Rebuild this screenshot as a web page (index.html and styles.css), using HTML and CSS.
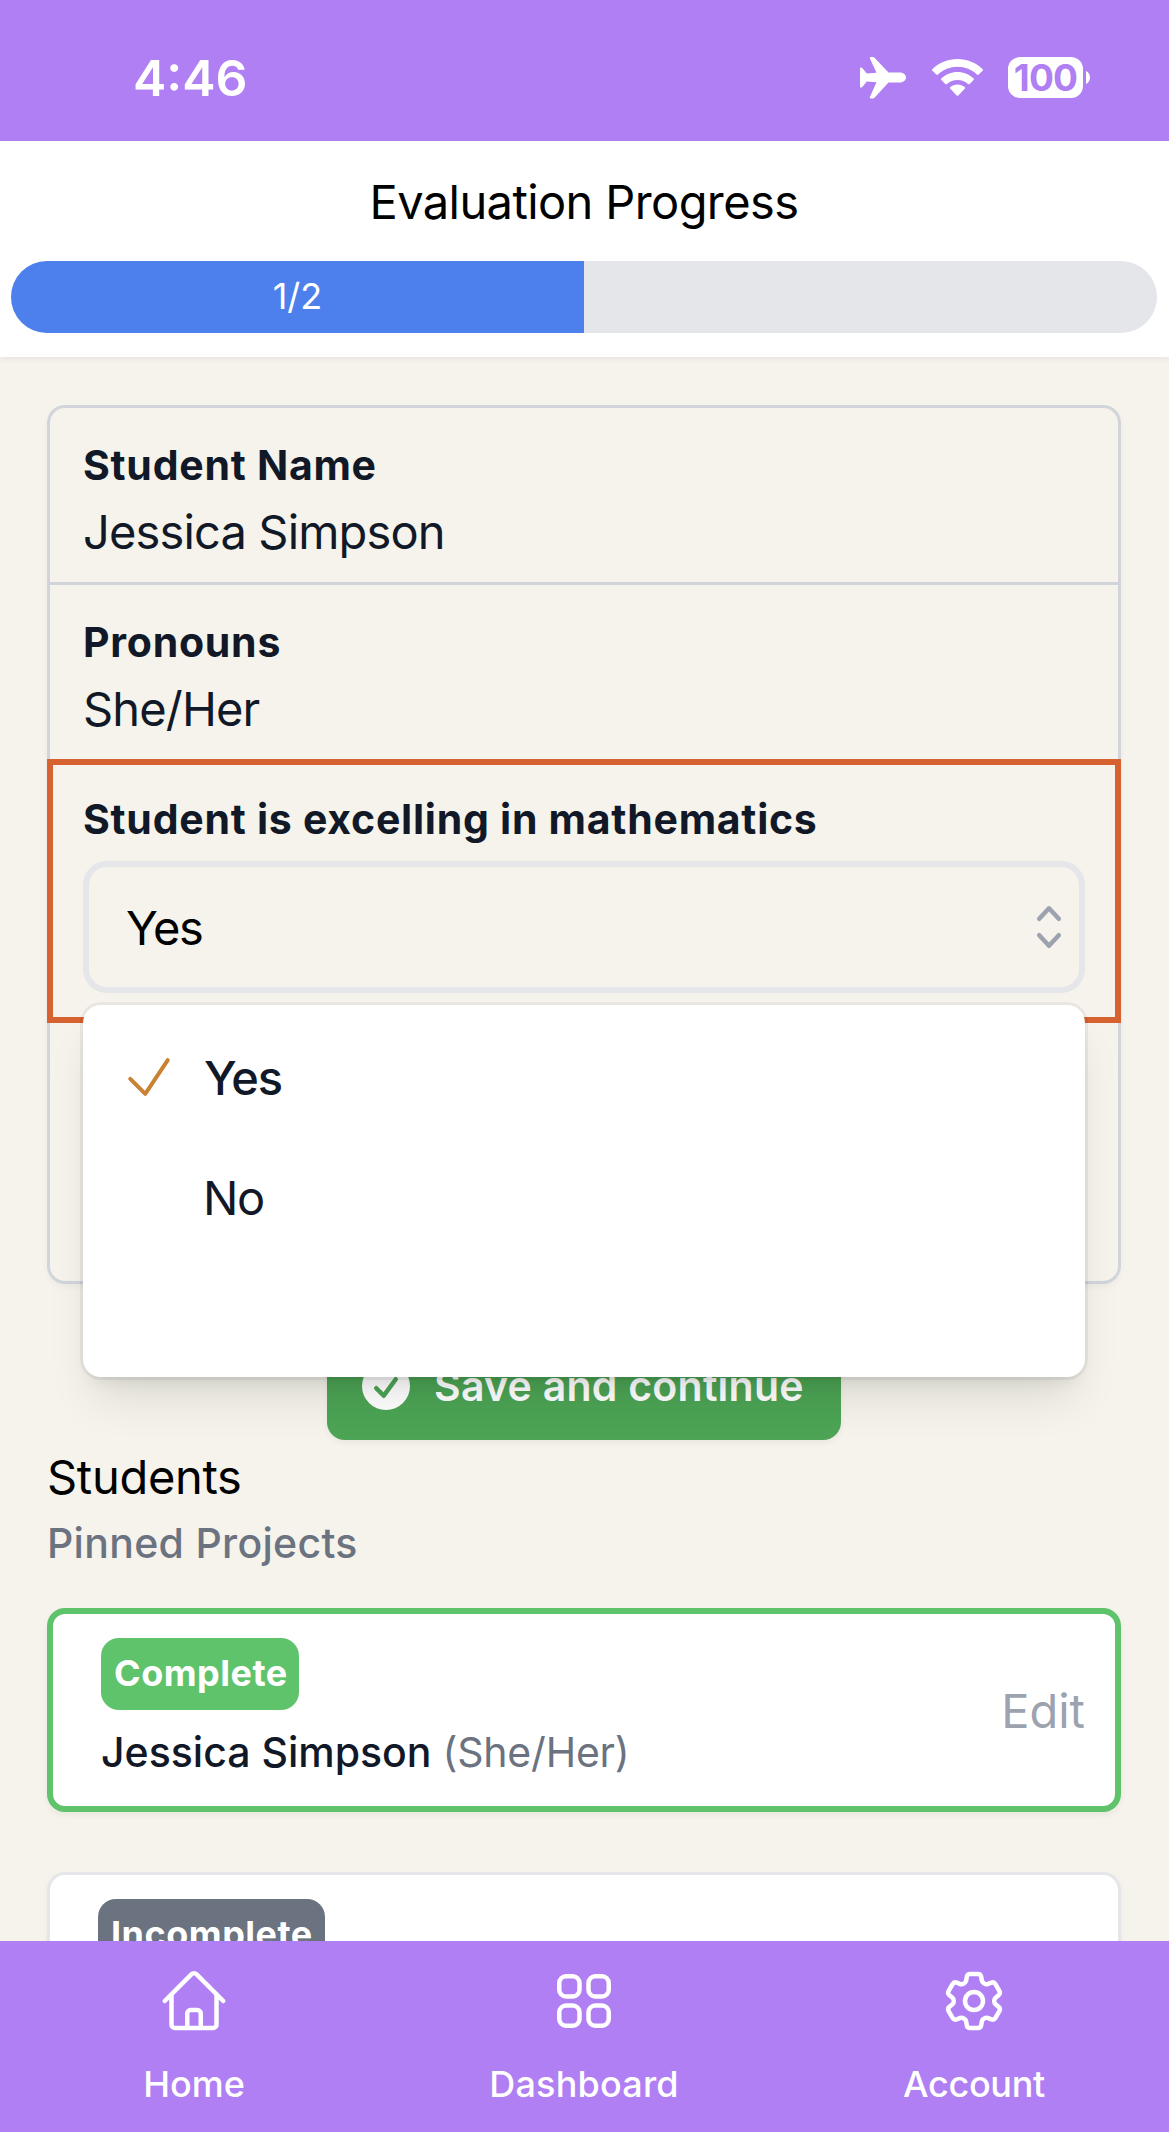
FILE: index.html
```html
<!DOCTYPE html>
<html lang="en">
<head>
<meta charset="utf-8">
<title>Evaluation Progress</title>
<link rel="stylesheet" href="styles.css">
</head>
<body>
<div class="screen">
  <div class="status-bar">
    <span class="clock">4:46</span>
    <div class="status-icons">
      <svg class="plane" viewBox="0 0 46 42" fill="#fff"><path d="M40 15.500c3.400 0 6 2.600 6 5s-2.600 5-6 5H28.500L14.500 40.700c-.6.500-1 .8-1.700.8h-2c-.8 0-1.200-.6-.9-1.400l6.600-14.900-9.700-.6L2.300 30c-.3.400-.6.600-1.100.6H.9c-.5 0-.9-.4-.9-.9V11.400c0-.5.4-.9.900-.9h.3c.5 0 .8.200 1.100.6l4.500 5.400 9.700-.7L9.900 1.400C9.600.6 10 0 10.800 0h2c.7 0 1.100.3 1.700.8l14 14.700z"/></svg>
      <svg class="wifi" viewBox="0 0 51 37" fill="#fff"><path d="M25.500 0C35.200 0 44 3.800 50.500 10c.6.600.6 1.200.1 1.700l-3.900 3.800c-.5.500-1.100.5-1.700 0-5.100-4.800-12-7.700-19.500-7.700S11.100 10.700 6 15.500c-.6.500-1.200.5-1.700 0L.4 11.700c-.5-.5-.5-1.100.1-1.700C7 3.800 15.800 0 25.500 0zM25.500 13c6.200 0 11.800 2.400 16 6.300.6.600.6 1.200.1 1.700l-3.900 3.900c-.5.500-1.100.5-1.700 0-2.800-2.500-6.400-4-10.500-4s-7.700 1.500-10.500 4c-.6.500-1.200.5-1.700 0L9.400 21c-.5-.5-.5-1.100.1-1.700 4.200-3.900 9.800-6.300 16-6.300zM25.500 25.500c2.700 0 5.200 1 7.100 2.600.6.500.6 1.100.1 1.600l-6.400 6.700c-.5.500-1.100.5-1.600 0l-6.400-6.700c-.5-.5-.5-1.100.1-1.600 1.900-1.600 4.400-2.600 7.100-2.600z"/></svg>
      <div class="battery">
        <span class="battery-body">100</span>
        <svg class="battery-tip" viewBox="0 0 4 13" fill="#fff"><path d="M0 0c2.400.9 4 3.400 4 6.500S2.400 12.100 0 13z"/></svg>
      </div>
    </div>
  </div>

  <header class="progress-header">
    <h1 class="title">Evaluation Progress</h1>
    <div class="progress-track">
      <div class="progress-fill" style="width: 50%">1/2</div>
    </div>
  </header>

  <main class="content">
    <section class="form-card">
      <div class="field">
        <div class="label">Student Name</div>
        <div class="value">Jessica Simpson</div>
      </div>
      <div class="field">
        <div class="label">Pronouns</div>
        <div class="value">She/Her</div>
      </div>
      <div class="field field-active">
        <div class="label">Student is excelling in mathematics</div>
        <div class="select">
          <span class="select-value">Yes</span>
          <svg class="icon-60" viewBox="0 0 20 20" fill="#9ca3af"><path d="M10 3a.75.75 0 01.55.24l3.25 3.5a.75.75 0 11-1.1 1.02L10 4.852 7.3 7.76a.75.75 0 01-1.1-1.02l3.25-3.5A.75.75 0 0110 3zm-3.760 9.200a.75.75 0 011.060.04l2.700 2.908 2.700-2.908a.75.75 0 111.100 1.020l-3.250 3.500a.75.75 0 01-1.100 0l-3.250-3.500a.75.75 0 01.04-1.060z"/></svg>
          <div class="options">
            <div class="option selected">
              <svg class="icon-60" viewBox="0 0 24 24" fill="none" stroke="#c98132" stroke-width="1.6" stroke-linecap="round" stroke-linejoin="round"><path d="M4.500 12.750l6 6 9-13.500"/></svg>
              <span class="option-text">Yes</span>
            </div>
            <div class="option"><span class="option-text">No</span></div>
          </div>
        </div>
      </div>
    </section>

    <button class="save">
      <svg class="icon-60" viewBox="0 0 20 20" fill="#fff"><path fill-rule="evenodd" d="M10 18a8 8 0 100-16 8 8 0 000 16zm3.857-9.809a.75.75 0 00-1.214-.882l-3.483 4.790-1.880-1.880a.75.75 0 10-1.060 1.061l2.500 2.500a.75.75 0 001.137-.089l4-5.500z" clip-rule="evenodd"/></svg>
      <span>Save and continue</span>
    </button>

    <h2 class="section-title">Students</h2>
    <h3 class="section-sub">Pinned Projects</h3>

    <div class="cards">
      <article class="student complete">
        <div class="student-info">
          <span class="badge badge-green">Complete</span>
          <div class="student-name">Jessica Simpson <span class="pronouns">(She/Her)</span></div>
        </div>
        <span class="edit">Edit</span>
      </article>
      <article class="student">
        <div class="student-info">
          <span class="badge badge-gray">Incomplete</span>
        </div>
      </article>
    </div>
  </main>

  <nav class="tabs">
    <div class="tab">
      <svg class="icon-72" viewBox="0 0 24 24" fill="none" stroke="#fff" stroke-width="1.5" stroke-linecap="round" stroke-linejoin="round"><path d="M2.250 12l8.954-8.955c.44-.439 1.152-.439 1.591 0L21.750 12M4.500 9.750v10.125c0 .621.504 1.125 1.125 1.125H9.750v-4.875c0-.621.504-1.125 1.125-1.125h2.250c.621 0 1.125.504 1.125 1.125V21h4.125c.621 0 1.125-.504 1.125-1.125V9.750M8.250 21h8.250"/></svg>
      <span class="tab-label">Home</span>
    </div>
    <div class="tab">
      <svg class="icon-72" viewBox="0 0 24 24" fill="none" stroke="#fff" stroke-width="1.5" stroke-linecap="round" stroke-linejoin="round"><path d="M3.750 6A2.250 2.250 0 016 3.750h2.250A2.250 2.250 0 0110.500 6v2.250a2.250 2.250 0 01-2.250 2.250H6a2.250 2.250 0 01-2.250-2.250V6zM3.750 15.750A2.250 2.250 0 016 13.500h2.250a2.250 2.250 0 012.250 2.250V18a2.250 2.250 0 01-2.250 2.250H6A2.250 2.250 0 013.750 18v-2.250zM13.500 6a2.250 2.250 0 012.250-2.250H18A2.250 2.250 0 0120.250 6v2.250A2.250 2.250 0 0118 10.500h-2.250a2.250 2.250 0 01-2.250-2.250V6zM13.500 15.750a2.250 2.250 0 012.250-2.250H18a2.250 2.250 0 012.250 2.250V18A2.250 2.250 0 0118 20.250h-2.250A2.250 2.250 0 0113.500 18v-2.250z"/></svg>
      <span class="tab-label tab-dashboard">Dashboard</span>
    </div>
    <div class="tab">
      <svg class="icon-72" viewBox="0 0 24 24" fill="none" stroke="#fff" stroke-width="1.5" stroke-linecap="round" stroke-linejoin="round"><path d="M9.594 3.940c.09-.542.56-.94 1.110-.94h2.593c.55 0 1.020.398 1.110.94l.213 1.281c.063.374.313.686.645.87.074.04.147.083.22.127.324.196.72.257 1.075.124l1.217-.456a1.125 1.125 0 011.370.49l1.296 2.247a1.125 1.125 0 01-.26 1.431l-1.003.827c-.293.24-.438.613-.431.992a6.759 6.759 0 010 .255c-.007.378.138.75.43.990l1.005.828c.424.350.534.954.26 1.430l-1.298 2.247a1.125 1.125 0 01-1.369.491l-1.217-.456c-.355-.133-.750-.072-1.076.124a6.570 6.570 0 01-.220.128c-.331.183-.581.495-.644.869l-.213 1.280c-.090.543-.560.941-1.110.941h-2.594c-.550 0-1.020-.398-1.110-.940l-.213-1.281c-.062-.374-.312-.686-.644-.870a6.520 6.520 0 01-.220-.127c-.325-.196-.720-.257-1.076-.124l-1.217.456a1.125 1.125 0 01-1.369-.490l-1.297-2.247a1.125 1.125 0 01.260-1.431l1.004-.827c.292-.240.437-.613.430-.992a6.932 6.932 0 010-.255c.007-.378-.138-.750-.430-.990l-1.004-.828a1.125 1.125 0 01-.260-1.430l1.297-2.247a1.125 1.125 0 011.370-.491l1.216.456c.356.133.751.072 1.076-.124.072-.044.146-.087.220-.128.332-.183.582-.495.644-.869l.214-1.281z"/><path d="M15 12a3 3 0 11-6 0 3 3 0 016 0z"/></svg>
      <span class="tab-label tab-account">Account</span>
    </div>
  </nav>
</div>
</body>
</html>
```
FILE: styles.css
```css
* { box-sizing: border-box; }

body {
  margin: 0;
  background: #f5f3eb;
  color: #000;
  font-family: Inter, "Liberation Sans", sans-serif;
  font-size: 47px;
  line-height: 72px;
}

h1, h2, h3 { margin: 0; font-size: inherit; font-weight: 400; }
svg { display: block; flex: none; }

.screen {
  display: flex;
  flex-direction: column;
  height: 2132px;
  overflow: hidden;
}

/* Status bar */
.status-bar {
  flex: none;
  display: flex;
  justify-content: space-between;
  align-items: center;
  height: 141px;
  padding: 14px 79px 0 133px;
  background: #b07ff4;
  color: #fff;
}
.clock { font-size: 50px; font-weight: 600; line-height: 72px; }
.status-icons { display: flex; align-items: center; gap: 26px; }
.plane { width: 46px; height: 42px; }
.wifi { width: 51px; height: 37px; }
.battery { display: flex; align-items: center; gap: 3px; margin-left: -1px; }
.battery-body {
  width: 75px;
  height: 41px;
  border-radius: 12px;
  background: #fff;
  color: #b07ff4;
  font-size: 37px;
  font-weight: 700;
  line-height: 41px;
  letter-spacing: -0.8px;
  text-align: center;
}
.battery-tip { width: 4px; height: 13px; }

/* Progress */
.progress-header {
  flex: none;
  height: 216px;
  padding: 25px 12px 0 11px;
  background: #fff;
  box-shadow: 0 3px 6px rgba(0, 0, 0, .05);
  text-align: center;
}
.title { letter-spacing: -0.6px; }
.progress-track {
  height: 72px;
  margin-top: 23px;
  border-radius: 36px;
  background: #e4e6ea;
  overflow: hidden;
}
.progress-fill {
  height: 72px;
  background: #4d80ed;
  color: #fff;
  font-size: 36px;
  line-height: 71px;
}

.content {
  flex: 1;
  min-height: 0;
  display: flex;
  flex-direction: column;
  padding: 48px 48px 0 47px;
}

/* Evaluation form */
.form-card {
  flex: none;
  height: 879px;
  border: 3px solid #d1d5db;
  border-radius: 18px;
  box-shadow: 0 3px 6px rgba(0, 0, 0, .04);
  color: #111827;
}
.field { padding: 27px 33px 14px; border-bottom: 3px solid #d1d5db; }
.field + .field { border-bottom: 0; }
.form-card .field-active {
  margin: 0 -3px;
  padding: 24px 30px;
  border: 6px solid #d6622f;
}
.label {
  font-size: 41px;
  font-weight: 700;
  line-height: 60px;
  letter-spacing: 0.75px;
}
.value { padding-top: 1px; letter-spacing: -0.85px; }

.select {
  position: relative;
  display: flex;
  align-items: center;
  justify-content: space-between;
  height: 132px;
  margin-top: 12px;
  padding: 0 0 0 37px;
  border: 6px solid #e4e6ea;
  border-radius: 24px;
  color: #000;
  letter-spacing: -1.3px;
}
.select-value, .option-text { padding-top: 2px; }
.icon-60 { width: 60px; height: 60px; }
.icon-72 { width: 72px; height: 72px; }

.options {
  position: absolute;
  z-index: 2;
  top: 138px;
  left: -6px;
  width: 1002px;
  height: 372px;
  padding: 12px 0;
  border-radius: 18px;
  background: #fff;
  color: #111827;
  box-shadow: 0 0 0 3px rgba(0, 0, 0, .05), 0 30px 45px -9px rgba(0, 0, 0, .1), 0 12px 18px -10px rgba(0, 0, 0, .1);
}
.option {
  display: flex;
  align-items: center;
  height: 120px;
  padding-left: 120px;
}
.option.selected { padding-left: 36px; gap: 25px; font-weight: 500; }

.save {
  flex: none;
  align-self: center;
  display: flex;
  align-items: center;
  gap: 18px;
  width: 514px;
  height: 108px;
  margin: 48px 0 0;
  padding: 0 0 0 29px;
  border: 0;
  border-radius: 18px;
  background: #4ca454;
  box-shadow: 0 3px 6px rgba(0, 0, 0, .05);
  color: #fff;
  font-family: inherit;
  font-size: 41px;
  font-weight: 600;
  line-height: 60px;
  letter-spacing: 0.25px;
}

/* Students */
.section-title { flex: none; padding-top: 1px; letter-spacing: -0.3px; }
.section-sub {
  flex: none;
  color: #6b7280;
  font-size: 41px;
  font-weight: 500;
  line-height: 60px;
  letter-spacing: 0.3px;
}
.cards { display: flex; flex-direction: column; gap: 60px; margin-top: 35px; }
.student {
  display: flex;
  align-items: center;
  justify-content: space-between;
  height: 201px;
  padding: 0 33px 0 48px;
  border: 3px solid #e4e6ea;
  border-radius: 18px;
  background: #fff;
  box-shadow: 0 3px 6px rgba(0, 0, 0, .05);
}
.student.complete {
  height: 204px;
  padding: 0 30px 0 48px;
  border: 6px solid #5fc36c;
}
.student-info { height: 144px; }
.student:not(.complete) .student-info { height: 147px; }
.badge {
  display: block;
  height: 72px;
  padding: 0 13px;
  border-radius: 18px;
  color: #fff;
  font-size: 36px;
  font-weight: 700;
  line-height: 71px;
  letter-spacing: 0.5px;
}
.badge-green { width: 198px; background: #5fc36c; }
.badge-gray { width: 227px; background: #6b7280; }
.student-name {
  margin-top: 12px;
  color: #111827;
  font-size: 41px;
  font-weight: 500;
  line-height: 60px;
}
.pronouns { color: #6b7280; font-weight: 400; letter-spacing: -0.2px; }
.edit { padding-top: 2px; color: #9ca3af; }

/* Bottom navigation */
.tabs {
  position: relative;
  z-index: 3;
  flex: none;
  display: flex;
  height: 191px;
  margin-left: -1px;
  background: #b07ff4;
  color: #fff;
}
.tab {
  flex: 1;
  display: flex;
  flex-direction: column;
  align-items: center;
  gap: 17px;
  padding-top: 24px;
}
.tab-label { font-size: 36px; font-weight: 500; line-height: 60px; }
.tab-dashboard { letter-spacing: 0.2px; }
.tab-account { letter-spacing: -0.3px; }
```
